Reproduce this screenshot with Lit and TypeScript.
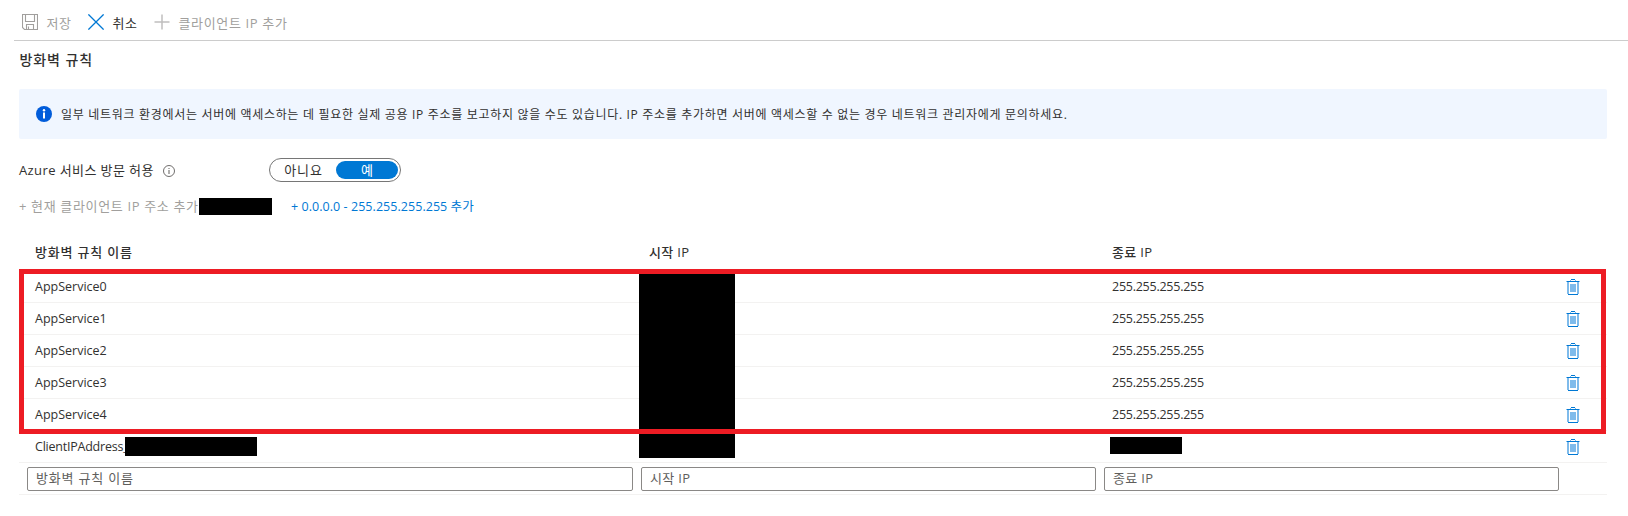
import { LitElement, html, css } from "lit";
import { customElement, state } from "lit/decorators.js";

interface Rule {
  name: string;
  end: string;
}

const trash = html`<svg class="trash" width="14" height="16" viewBox="0 0 14 16" shape-rendering="crispEdges">
  <path fill="#7fbbeb" d="M4 1h1v1H4zM9 1h1v1H9zM0 2h1v1H0zM13 2h1v1h-1zM1 3h2v12H1zM11 3h2v12h-2zM4 5h6v8H4z" />
  <path fill="#0078d4" d="M5 0h4v1H5zM1 2h12v1H1zM2 15h10v1H2z" />
</svg>`;

@customElement("app-root")
export class AppRoot extends LitElement {
  static styles = css`
    :host {
      display: block;
      box-sizing: border-box;
      width: 1628px;
      height: 516px;
      overflow: hidden;
      background: #fff;
      color: #323130;
      font: 13px/18px "Open Sans", "Noto Sans CJK KR", sans-serif;
    }
    .toolbar {
      display: flex;
      align-items: center;
      box-sizing: border-box;
      height: 41px;
      margin-left: 14px;
      padding: 4px 0 0 8px;
      border-bottom: 1px solid #ccc;
      letter-spacing: 0.65px;
      color: #a19f9d;
    }
    .command {
      display: flex;
      align-items: center;
      white-space: nowrap;
    }
    .command svg { flex: none; margin-right: 8.5px; }
    .command span { padding-top: 1px; }
    .save { width: 66px; }
    .cancel { width: 66px; color: #323130; }
    h1 {
      margin: 9px 0 0 19.5px;
      font-size: 14px;
      font-weight: 500;
      line-height: 20px;
      letter-spacing: 0.9px;
    }
    .notice {
      display: flex;
      align-items: center;
      height: 50px;
      margin: 19px 21px 0 19px;
      padding-left: 17px;
      box-sizing: border-box;
      border-radius: 2px;
      background: #f0f6ff;
      font-size: 12px;
      letter-spacing: 0.69px;
      white-space: nowrap;
    }
    .notice svg { margin-right: 9px; }
    .notice span { padding-top: 2px; }
    .access {
      display: flex;
      align-items: center;
      height: 24px;
      margin: 19px 0 0 19px;
    }
    .label {
      display: flex;
      align-items: center;
      width: 250px;
      letter-spacing: 0.4px;
    }
    .label svg { margin: 2px 0 0 9px; }
    .toggle {
      display: flex;
      align-items: center;
      box-sizing: border-box;
      width: 132px;
      height: 24px;
      padding: 0 2px;
      border: 1px solid #767676;
      border-radius: 12px;
      letter-spacing: 0.8px;
    }
    .option {
      width: 62px;
      height: 18px;
      line-height: 18px;
      border-radius: 9px;
      text-align: center;
      box-sizing: border-box;
    }
    .option.off { width: 64px; padding-right: 1px; }
    .option.on { background: #0078d4; color: #fff; padding-left: 1px; }
    .links {
      display: flex;
      align-items: center;
      height: 18px;
      margin: 15px 0 0 19px;
      white-space: nowrap;
    }
    .disabled { width: 180px; color: #a19f9d; letter-spacing: 0.65px; }
    .link {
      margin-left: 19px;
      padding-top: 1px;
      color: #0078d4;
      font-size: 12.5px;
      letter-spacing: 0.05px;
    }
    .mask { flex: none; background: #000; }
    .mask.address { width: 73px; height: 17px; }
    .table { margin: 24px 21px 0 19px; }
    .row {
      display: grid;
      grid-template-columns: 618px 463px 463px 44px;
      align-items: center;
      box-sizing: border-box;
      height: 32px;
      border-bottom: 1px solid #f3f2f1;
    }
    .row.head {
      padding-bottom: 5px;
      border-bottom-color: transparent;
      font-weight: 500;
      letter-spacing: 0.8px;
    }
    .group { position: relative; }
    .group::after {
      content: "";
      position: absolute;
      inset: -2px 1px -3px 0;
      border: 5px solid #ed1c24;
      pointer-events: none;
    }
    .cell { display: flex; align-items: center; padding-left: 16px; white-space: nowrap; }
    .cell.ip { padding-left: 12px; }
    .cell.text { font-size: 12.5px; }
    .cell.text.ip { letter-spacing: -0.25px; }
    .cell.masked { align-self: stretch; align-items: stretch; padding-left: 2px; margin-bottom: -1px; }
    .mask.start { width: 96px; }
    .client .mask.start { height: 27px; }
    .client .name { letter-spacing: -0.23px; }
    .prefix { width: 90px; }
    .mask.client-name { position: relative; width: 132px; height: 19px; }
    .mask.end { width: 72px; height: 17px; margin: -2px 0 0 -2px; }
    .trash { display: block; margin: 1px 0 0 3px; }
    .field { padding: 1px 4px 0 8px; }
    .field.mid { padding-left: 4px; }
    input {
      display: block;
      box-sizing: border-box;
      width: 100%;
      height: 24px;
      margin: 0;
      padding: 0 8px 3px;
      border: 1px solid #8a8886;
      border-radius: 2px;
      background: #fff;
      font: inherit;
      letter-spacing: 0.8px;
      outline: none;
    }
    input::placeholder { color: #605e5c; opacity: 1; }
    .mid input, .head .ip { letter-spacing: 0.3px; }
  `;

  @state() private allowed = true;

  private rules: Rule[] = [0, 1, 2, 3, 4].map((n) => ({ name: `AppService${n}`, end: "255.255.255.255" }));

  private row(rule: Rule) {
    return html`<div class="row">
      <div class="cell text">${rule.name}</div>
      <div class="cell masked"><span class="mask start"></span></div>
      <div class="cell text ip">${rule.end}</div>
      ${trash}
    </div>`;
  }

  render() {
    return html`
      <div class="toolbar">
        <div class="command save">
          <svg width="16" height="16" viewBox="0 0 16 16" fill="none" stroke="#a19f9d" stroke-width="1.1">
            <path d="M.5.5h15v15h-13l-2-2zM3.5.5v7h9v-7M4.5 15.5v-5h7v5M6.500 12.5v3" />
          </svg><span>저장</span>
        </div>
        <div class="command cancel">
          <svg width="16" height="16" viewBox="0 0 16 16" fill="none" stroke="#0078d4" stroke-width="1.3">
            <path d="M.4.4l15.2 15.2M15.6.4L.4 15.6" />
          </svg><span>취소</span>
        </div>
        <div class="command">
          <svg width="16" height="16" viewBox="0 0 16 16" fill="none" stroke="#c0bfbe" stroke-width="1.5">
            <path d="M8 .5v15M.5 8h15" />
          </svg><span>클라이언트 IP 추가</span>
        </div>
      </div>
      <h1>방화벽 규칙</h1>
      <div class="notice">
        <svg width="16" height="16" viewBox="0 0 16 16">
          <circle cx="8" cy="8" r="8" fill="#015cda" />
          <path d="M7 6.5h2v6H7z" fill="#fff" /><circle cx="8" cy="4.2" r="1.2" fill="#fff" />
        </svg>
        <span>일부 네트워크 환경에서는 서버에 액세스하는 데 필요한 실제 공용 IP 주소를 보고하지 않을 수도 있습니다. IP 주소를 추가하면 서버에 액세스할 수 없는 경우 네트워크 관리자에게 문의하세요.</span>
      </div>
      <div class="access">
        <div class="label">Azure 서비스 방문 허용
          <svg width="12" height="12" viewBox="0 0 12 12">
            <circle cx="6" cy="6" r="5.5" fill="none" stroke="#605e5c" stroke-width=".9" />
            <path d="M5.5 5h1v4h-1zM5.5 3h1v1h-1z" fill="#605e5c" />
          </svg>
        </div>
        <div class="toggle" @click=${() => (this.allowed = !this.allowed)}>
          <span class="option off">아니요</span>
          <span class="option ${this.allowed ? "on" : ""}">예</span>
        </div>
      </div>
      <div class="links">
        <span class="disabled">+ 현재 클라이언트 IP 주소 추가</span><span class="mask address"></span>
        <span class="link">+ 0.0.0.0 - 255.255.255.255 추가</span>
      </div>
      <div class="table">
        <div class="row head">
          <div class="cell">방화벽 규칙 이름</div>
          <div class="cell ip">시작 IP</div>
          <div class="cell ip">종료 IP</div>
        </div>
        <div class="group">${this.rules.map((rule) => this.row(rule))}</div>
        <div class="row client">
          <div class="cell text name"><span class="prefix">ClientIPAddress_</span><span class="mask client-name"></span></div>
          <div class="cell masked"><span class="mask start"></span></div>
          <div class="cell ip"><span class="mask end"></span></div>
          ${trash}
        </div>
        <div class="row">
          <div class="field"><input placeholder="방화벽 규칙 이름" /></div>
          <div class="field mid"><input placeholder="시작 IP" /></div>
          <div class="field mid"><input placeholder="종료 IP" /></div>
        </div>
      </div>
    `;
  }
}
